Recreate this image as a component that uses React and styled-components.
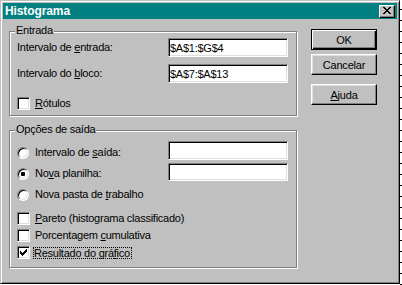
import React from 'react';
import styled, { createGlobalStyle } from 'styled-components';

const Global = createGlobalStyle`
  html, body { margin: 0; padding: 0; background: #fff; }
  body { font-family: "Liberation Sans", Arial, sans-serif; font-size: 11px; }
  * { box-sizing: border-box; }
`;

const Screen = styled.div`
  display: flex;
  align-items: flex-start;
  width: 402px;
  height: 285px;
  overflow: hidden;
  background: #fff;
`;

const BackStrip = styled.div`
  width: 2px;
  height: 285px;
  background: repeating-linear-gradient(to bottom, #fff 0 9px, #000 9px 10px, #fff 10px 11px);
`;

const Window = styled.div`
  width: 400px;
  height: 284px;
  background: #c0c0c0;
  border: 1px solid;
  border-color: #c0c0c0 #000 #000 #c0c0c0;
  box-shadow: inset 1px 1px 0 #fff, inset -1px -1px 0 #808080;
  padding: 2px;
  display: flex;
  flex-direction: column;
`;

const TitleBar = styled.div`
  height: 16px;
  background: #008080;
  display: flex;
  align-items: center;
  justify-content: space-between;
  padding: 0 2px 0 2px;
`;

const Title = styled.span`
  color: #fff;
  font-weight: bold;
  font-size: 12px;
  letter-spacing: -0.1px;
`;

const CloseBtn = styled.div`
  width: 16px;
  height: 13px;
  background: #c0c0c0;
  border: 1px solid;
  border-color: #fff #000 #000 #fff;
  box-shadow: inset -1px -1px 0 #808080;
  display: flex;
  align-items: center;
  justify-content: center;
  padding-bottom: 1px;
`;

const Client = styled.div`
  display: flex;
  align-items: flex-start;
  padding-left: 6px;
`;

const LeftCol = styled.div`
  width: 288px;
  display: flex;
  flex-direction: column;
`;

const Frame = styled.div`
  position: relative;
  margin-top: ${(p) => p.$mt}px;
  border: 1px solid #808080;
  box-shadow: 1px 1px 0 #fff, inset 1px 1px 0 #fff;
  padding: ${(p) => p.$pad};
  display: flex;
  flex-direction: column;
`;

const Legend = styled.span`
  position: absolute;
  top: -8px;
  left: 5px;
  padding: 0 1px;
  background: #c0c0c0;
  line-height: 13px;
  letter-spacing: -0.25px;
  color: #000;
`;

const Row = styled.div`
  display: flex;
  align-items: center;
  justify-content: space-between;
  height: ${(p) => p.$h}px;
  margin-top: ${(p) => p.$mt || 0}px;
`;

const Label = styled.span`
  color: #000;
  letter-spacing: -0.25px;
  white-space: nowrap;
  line-height: 13px;
`;

const Field = styled.div`
  width: 120px;
  height: ${(p) => p.$h}px;
  background: #fff;
  border: 1px solid;
  border-color: #808080 #fff #fff #808080;
  box-shadow: inset 1px 1px 0 #000, inset -1px -1px 0 #dfdfdf;
  padding: 1px 2px 0 1px;
  display: flex;
  align-items: center;
  letter-spacing: -0.25px;
  color: #000;
  margin-bottom: ${(p) => p.$mb || 0}px;
`;

const Option = styled.div`
  display: flex;
  align-items: center;
  gap: ${(p) => p.$gap}px;
`;

const CheckBox = styled.div`
  width: 13px;
  height: 13px;
  background: #fff;
  border: 1px solid;
  border-color: #808080 #fff #fff #808080;
  box-shadow: inset 1px 1px 0 #000, inset -1px -1px 0 #dfdfdf;
  display: flex;
  align-items: center;
  justify-content: center;
`;

const Radio = styled.div`
  width: 12px;
  height: 12px;
  border-radius: 50%;
  background: #fff;
  border: 1px solid;
  border-color: #808080 #fff #fff #808080;
  box-shadow: inset 1px 1px 0 #000, inset -1px -1px 0 #dfdfdf;
  display: flex;
  align-items: center;
  justify-content: center;
`;

const Dot = styled.div`
  width: 4px;
  height: 4px;
  border-radius: 1px;
  background: #000;
`;

const Focus = styled.span`
  border: 1px dotted #000;
  padding: 0 1px 0 0;
  line-height: 10px;
  letter-spacing: -0.25px;
  margin-left: -2px;
`;

const ButtonCol = styled.div`
  display: flex;
  flex-direction: column;
  margin-left: 14px;
  margin-top: 10px;
`;

const Button = styled.div`
  width: 66px;
  height: 21px;
  margin-top: ${(p) => p.$mt || 0}px;
  background: #c0c0c0;
  border: 1px solid;
  border-color: ${(p) => (p.$default ? '#000' : '#fff #000 #000 #fff')};
  box-shadow: ${(p) =>
    p.$default
      ? 'inset 1px 1px 0 #fff, inset -1px -1px 0 #000, inset -2px -2px 0 #808080'
      : 'inset -1px -1px 0 #808080, inset 1px 1px 0 #dfdfdf'};
  display: flex;
  align-items: center;
  justify-content: center;
  letter-spacing: -0.2px;
  color: #000;
`;

const CloseGlyph = () => (
  <svg width="8" height="7" viewBox="0 0 8 7" shapeRendering="crispEdges">
    <path
      fill="#000"
      d="M0 0h2v1H0zM6 0h2v1H6zM1 1h2v1H1zM5 1h2v1H5zM2 2h4v1H2zM3 3h2v1H3zM2 4h4v1H2zM1 5h2v1H1zM5 5h2v1H5zM0 6h2v1H0zM6 6h2v1H6z"
    />
  </svg>
);

const CheckGlyph = () => (
  <svg width="7" height="7" viewBox="0 0 7 7" shapeRendering="crispEdges">
    <path
      fill="#000"
      d="M6 0h1v1H6zM5 1h2v1H5zM0 2h1v1H0zM4 2h3v1H4zM0 3h2v1H0zM3 3h3v1H3zM0 4h5v1H0zM1 5h3v1H1zM2 6h1v1H2z"
    />
  </svg>
);

export default function App() {
  return (
    <>
      <Global />
      <Screen>
        <Window>
          <TitleBar>
            <Title>Histograma</Title>
            <CloseBtn>
              <CloseGlyph />
            </CloseBtn>
          </TitleBar>
          <Client>
            <LeftCol>
              <Frame $mt={12} $pad="6px 8px 5px 7px">
                <Legend>Entrada</Legend>
                <Row $h={19}>
                  <Label>
                    Intervalo de <u>e</u>ntrada:
                  </Label>
                  <Field $h={19}>$A$1:$G$4</Field>
                </Row>
                <Row $h={19} $mt={7}>
                  <Label>
                    Intervalo do <u>b</u>loco:
                  </Label>
                  <Field $h={19}>$A$7:$A$13</Field>
                </Row>
                <Row $h={13} $mt={14}>
                  <Option $gap={5}>
                    <CheckBox />
                    <Label>
                      <u>R</u>ótulos
                    </Label>
                  </Option>
                </Row>
              </Frame>
              <Frame $mt={14} $pad="11px 8px 6px 7px">
                <Legend>Opções de saída</Legend>
                <Row $h={21}>
                  <Option $gap={6}>
                    <Radio />
                    <Label>
                      Intervalo de <u>s</u>aída:
                    </Label>
                  </Option>
                  <Field $h={19} $mb={5} />
                </Row>
                <Row $h={21}>
                  <Option $gap={6}>
                    <Radio>
                      <Dot />
                    </Radio>
                    <Label>
                      No<u>v</u>a planilha:
                    </Label>
                  </Option>
                  <Field $h={18} $mb={4} />
                </Row>
                <Row $h={21}>
                  <Option $gap={6}>
                    <Radio />
                    <Label>
                      Nova pasta de <u>t</u>rabalho
                    </Label>
                  </Option>
                </Row>
                <Row $h={17} $mt={5}>
                  <Option $gap={5}>
                    <CheckBox />
                    <Label>
                      <u>P</u>areto (histograma classificado)
                    </Label>
                  </Option>
                </Row>
                <Row $h={17}>
                  <Option $gap={5}>
                    <CheckBox />
                    <Label>
                      Porcentagem <u>c</u>umulativa
                    </Label>
                  </Option>
                </Row>
                <Row $h={17}>
                  <Option $gap={5}>
                    <CheckBox>
                      <CheckGlyph />
                    </CheckBox>
                    <Focus>
                      Resultado do grá<u>f</u>ico
                    </Focus>
                  </Option>
                </Row>
              </Frame>
            </LeftCol>
            <ButtonCol>
              <Button $default>OK</Button>
              <Button $mt={4}>Cancelar</Button>
              <Button $mt={9}>
                <span>
                  <u>A</u>juda
                </span>
              </Button>
            </ButtonCol>
          </Client>
        </Window>
        <BackStrip />
      </Screen>
    </>
  );
}
